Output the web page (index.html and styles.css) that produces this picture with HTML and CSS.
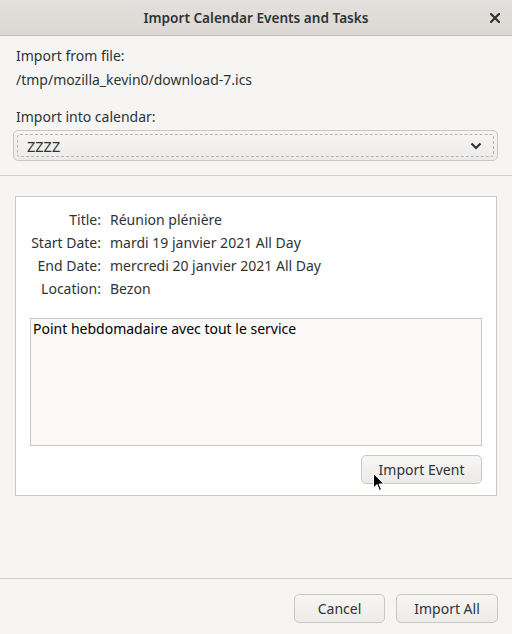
FILE: index.html
```html
<!DOCTYPE html>
<html>
<head>
<meta charset="utf-8">
<link rel="stylesheet" href="styles.css">
</head>
<body>
<div class="window">
  <header class="titlebar">
    <span class="title">Import Calendar Events and Tasks</span>
    <svg class="close" width="10" height="10" viewBox="0 0 10 10"><path d="M1 1 L9 9 M9 1 L1 9" stroke="#2e3436" stroke-width="2.2" stroke-linecap="square"/></svg>
  </header>
  <section class="top">
    <div class="label">Import from file:</div>
    <div class="path">/tmp/mozilla_kevin0/download-7.ics</div>
    <div class="label cal-label">Import into calendar:</div>
    <div class="select">
      <div class="select-inner">
        <span>ZZZZ</span>
        <svg width="12" height="8" viewBox="0 0 12 8"><path d="M1.5 1.5 L6 6 L10.5 1.5" fill="none" stroke="#2e3436" stroke-width="2.2"/></svg>
      </div>
    </div>
  </section>
  <hr class="sep">
  <section class="middle">
    <div class="panel">
      <div class="details">
        <span class="k">Title:</span><span class="v">Réunion plénière</span>
        <span class="k">Start Date:</span><span class="v">mardi 19 janvier 2021 All Day</span>
        <span class="k">End Date:</span><span class="v">mercredi 20 janvier 2021 All Day</span>
        <span class="k">Location:</span><span class="v">Bezon</span>
      </div>
      <div class="desc">Point hebdomadaire avec tout le service</div>
      <div class="panel-actions">
        <button class="btn btn-event">Import Event</button>
      </div>
    </div>
  </section>
  <hr class="sep bottom-sep">
  <footer class="actions">
    <button class="btn btn-cancel">Cancel</button>
    <button class="btn btn-all">Import All</button>
  </footer>
  <svg class="cursor" width="12" height="19" viewBox="0 0 12 19"><path d="M0.5 0.5 L0.5 15 L4 11.5 L6.5 17.5 L8.5 16.5 L6 11 L11 11 Z" fill="#000" stroke="#fff" stroke-width="1"/></svg>
</div>
</body>
</html>
```
FILE: styles.css
```css
* { box-sizing: border-box; }
html, body { margin: 0; padding: 0; }
body {
  width: 512px;
  height: 634px;
  background: #f6f5f4;
  font-family: "Noto Sans", "DejaVu Sans", sans-serif;
  font-size: 14px;
  color: #2e3436;
  overflow: hidden;
}
.window { position: relative; height: 634px; display: flex; flex-direction: column; }
.titlebar {
  height: 36px;
  flex: none;
  background: linear-gradient(#e3e0dd, #dcd8d4);
  border-bottom: 1px solid #c0bdb8;
  display: flex;
  align-items: center;
  justify-content: center;
  position: relative;
}
.title { font-weight: 600; font-size: 13.6px; color: #2e3436; }
.close { position: absolute; right: 12px; top: 13px; }
.top { padding: 10px 16px 0 16px; }
.label { line-height: 20px; }
.path { line-height: 20px; margin-top: 4px; }
.cal-label { margin-top: 17px; }
.select {
  margin: 3px -2px 0 -3px;
  height: 31px;
  border: 1px solid #cdc7c2;
  border-radius: 5px;
  background: linear-gradient(#f6f5f4, #edebe9);
  padding: 3px;
}
.select-inner {
  height: 100%;
  border: 1px dashed #b8b4b0;
  border-radius: 3px;
  display: flex;
  align-items: center;
  justify-content: space-between;
  padding: 0 11px 0 9px;
  font-size: 14.5px;
}
.sep { margin: 14px 0 0 0; border: 0; border-top: 1px solid #d3cfcb; height: 0; }
.middle { padding: 20px 15px 0 15px; }
.panel {
  background: #fff;
  border: 1px solid #cdc7c2;
  height: 300px;
  padding: 13px 14px 10px 14px;
  display: flex;
  flex-direction: column;
}
.details {
  display: grid;
  grid-template-columns: 71px auto;
  column-gap: 9px;
  row-gap: 3px;
  line-height: 20px;
}
.k { text-align: right; }
.desc {
  margin-top: 19px;
  height: 128px;
  background: #faf9f8;
  border: 1px solid #cdc7c2;
  padding: 1px 2px;
  line-height: 18px;
  color: #000;
}
.panel-actions { display: flex; justify-content: flex-end; margin-top: 9px; }
.btn {
  font-family: inherit;
  font-size: 14px;
  color: #2e3436;
  height: 29px;
  border: 1px solid #cdc7c2;
  border-radius: 5px;
  background: linear-gradient(#f7f6f5, #edebe9);
  padding: 0 0 1px 0;
}
.btn-event { width: 121px; }
.bottom-sep { margin-top: auto; }
.actions { height: 55px; display: flex; justify-content: flex-end; align-items: center; gap: 11px; padding: 4px 14px 0 0; }
.btn-cancel { width: 91px; }
.btn-all { width: 102px; }
.cursor { position: absolute; left: 373px; top: 473px; }
```
